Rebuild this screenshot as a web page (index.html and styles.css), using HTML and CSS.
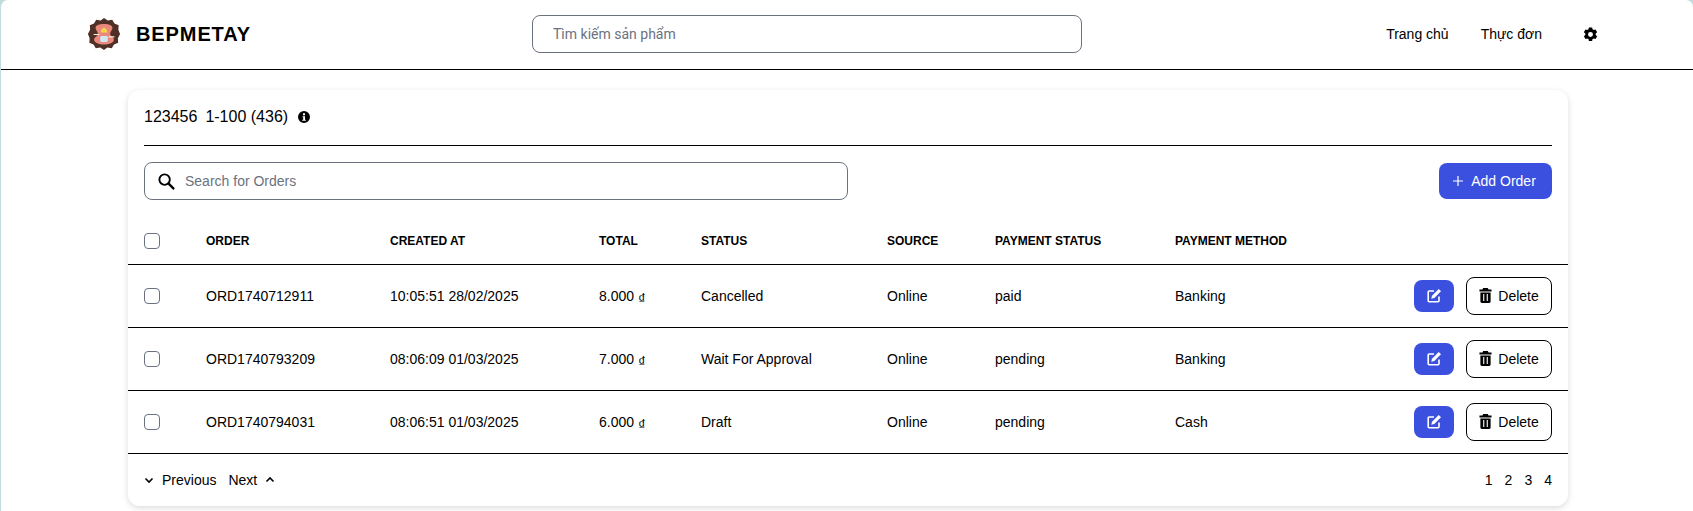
FILE: index.html
```html
<!DOCTYPE html>
<html lang="vi">
<head>
<meta charset="utf-8">
<title>BEPMETAY</title>
<link rel="stylesheet" href="styles.css">
</head>
<body>
<div class="app">
  <header class="topbar">
    <a class="brand" href="#">
      <svg class="logo" viewBox="0 0 36 36" aria-hidden="true">
        <path fill="#4f2f26" d="M18 1l4 2.600 4.700-.6 2.400 4 4.400 1.800-.3 4.700L35 18l-2.300 4.500.3 4.700-4.400 1.800-2.400 4-4.700-.6L18 35l-4-2.600-4.700.6-2.400-4-4.400-1.800.3-4.700L1 18l2.300-4.500-.3-4.700 4.400-1.800 2.400-4 4.700.6z"/>
        <path fill="#e8897c" d="M9 11.500C9 9 13 7.500 18 7.500s9 1.500 9 4c0 2.500-2.500 4-2.500 6.500s4 3 4 6c0 3-5 5-10.500 5S7.500 27 7.500 24c0-3 4-3.500 4-6S9 14 9 11.500z"/>
        <path fill="#f7d24f" d="M14.500 16.500c0-2.500 1.500-5 3.500-5s3.500 2.500 3.500 5z"/>
        <rect x="14" y="20" width="8" height="6.500" rx="1.500" fill="#cfe6f5"/>
        <path fill="none" stroke="#f5ece6" stroke-width="1.200" d="M7 18.500h6M23 21h6"/>
      </svg>
      <span class="brand-name">BEPMETAY</span>
    </a>
    <input class="site-search" type="text" placeholder="Tìm kiếm sản phẩm">
    <nav class="nav">
      <a href="#">Trang chủ</a>
      <a href="#">Thực đơn</a>
      <svg class="gear" viewBox="0 0 24 24" aria-hidden="true"><path fill="#000" fill-rule="evenodd" d="M14.300 2l.5 2.700c.6.200 1.200.6 1.700 1l2.600-.9 2.300 4-2.100 1.800c.1.700.1 1.300 0 2l2.100 1.800-2.300 4-2.600-.9c-.5.400-1.100.8-1.700 1l-.5 2.700H9.700l-.5-2.700c-.6-.2-1.200-.6-1.700-1l-2.600.9-2.300-4 2.100-1.800c-.1-.7-.1-1.300 0-2L2.600 8.800l2.300-4 2.600.9c.5-.4 1.100-.8 1.700-1L9.700 2zM12 8.500a3.500 3.500 0 1 0 0 7 3.500 3.500 0 0 0 0-7z"/></svg>
    </nav>
  </header>

  <main class="content">
    <section class="card">
      <div class="card-title">
        <span>123456</span>
        <span>1-100 (436)</span>
        <svg class="info" viewBox="0 0 16 16" aria-hidden="true"><path fill="#000" fill-rule="evenodd" d="M8 2a6 6 0 1 1 0 12A6 6 0 0 1 8 2zM7 4.300h2v2H7zM6.500 7.300H9v3.500h.800v1H6.300v-1h.900V8.300h-.700z"/></svg>
      </div>
      <div class="toolbar">
        <label class="order-search">
          <svg class="search-icon" viewBox="0 0 20 20" aria-hidden="true"><circle cx="8" cy="8" r="5.500" fill="none" stroke="#000" stroke-width="2"/><path d="M12 12l6 6" stroke="#000" stroke-width="2.400"/></svg>
          <input type="text" placeholder="Search for Orders">
        </label>
        <button class="btn-add" type="button">
          <svg class="plus" viewBox="0 0 12 12" aria-hidden="true"><path d="M6 1v10M1 6h10" stroke="#fff" stroke-width="1.200"/></svg>
          Add Order
        </button>
      </div>
      <table class="orders">
        <colgroup>
          <col class="c-check"><col class="c-order"><col class="c-created"><col class="c-total"><col class="c-status"><col class="c-source"><col class="c-pay"><col class="c-method"><col class="c-actions">
        </colgroup>
        <thead>
          <tr>
            <th><span class="check"></span></th>
            <th>ORDER</th><th>CREATED AT</th><th>TOTAL</th><th>STATUS</th><th>SOURCE</th><th>PAYMENT STATUS</th><th>PAYMENT METHOD</th><th></th>
          </tr>
        </thead>
        <tbody>
          <tr>
            <td><span class="check"></span></td>
            <td>ORD1740712911</td><td>10:05:51 28/02/2025</td><td>8.000 <span class="cur">₫</span></td><td>Cancelled</td><td>Online</td><td>paid</td><td>Banking</td>
            <td><div class="actions"><button class="btn-edit" type="button"><svg viewBox="0 0 16 16" aria-hidden="true"><use href="#i-edit"/></svg></button><button class="btn-del" type="button"><svg viewBox="0 0 14 16" aria-hidden="true"><use href="#i-trash"/></svg>Delete</button></div></td>
          </tr>
          <tr>
            <td><span class="check"></span></td>
            <td>ORD1740793209</td><td>08:06:09 01/03/2025</td><td>7.000 <span class="cur">₫</span></td><td>Wait For Approval</td><td>Online</td><td>pending</td><td>Banking</td>
            <td><div class="actions"><button class="btn-edit" type="button"><svg viewBox="0 0 16 16" aria-hidden="true"><use href="#i-edit"/></svg></button><button class="btn-del" type="button"><svg viewBox="0 0 14 16" aria-hidden="true"><use href="#i-trash"/></svg>Delete</button></div></td>
          </tr>
          <tr>
            <td><span class="check"></span></td>
            <td>ORD1740794031</td><td>08:06:51 01/03/2025</td><td>6.000 <span class="cur">₫</span></td><td>Draft</td><td>Online</td><td>pending</td><td>Cash</td>
            <td><div class="actions"><button class="btn-edit" type="button"><svg viewBox="0 0 16 16" aria-hidden="true"><use href="#i-edit"/></svg></button><button class="btn-del" type="button"><svg viewBox="0 0 14 16" aria-hidden="true"><use href="#i-trash"/></svg>Delete</button></div></td>
          </tr>
        </tbody>
      </table>
      <div class="pager">
        <div class="pager-nav">
          <svg class="chev" viewBox="0 0 10 10" aria-hidden="true"><path d="M1.500 3.500L5 7l3.500-3.500" fill="none" stroke="#000" stroke-width="1.600"/></svg>
          <span class="prev">Previous</span>
          <span class="next">Next</span>
          <svg class="chev" viewBox="0 0 10 10" aria-hidden="true"><path d="M1.500 6.500L5 3l3.500 3.500" fill="none" stroke="#000" stroke-width="1.600"/></svg>
        </div>
        <div class="pages"><span>1</span><span>2</span><span>3</span><span>4</span></div>
      </div>
    </section>
  </main>
</div>
<svg class="defs" aria-hidden="true">
  <symbol id="i-edit" viewBox="0 0 16 16">
    <path fill="none" stroke="currentColor" stroke-width="1.600" d="M8 3H3.200a1 1 0 0 0-1 1v8.800a1 1 0 0 0 1 1H12a1 1 0 0 0 1-1V8.500"/>
    <path fill="currentColor" d="M12.700 1l2.300 2.300L8.300 10l-3 .7.700-3z"/>
  </symbol>
  <symbol id="i-trash" viewBox="0 0 14 16">
    <path fill="currentColor" fill-rule="evenodd" d="M4.500 0h5l.8 1.500H13.500v2.200H.5V1.500h3.200zM1.500 4.700h11v9.800A1.500 1.500 0 0 1 11 16H3a1.500 1.500 0 0 1-1.500-1.500zM4.500 6.500v7.500h1.200V6.500zM8.300 6.500v7.500h1.200V6.500z"/>
  </symbol>
</svg>
</body>
</html>
```
FILE: styles.css
```css
* { box-sizing: border-box; }
html, body { margin: 0; padding: 0; }
body {
  background: #c3dade;
  font-family: "Liberation Sans", Arial, sans-serif;
  font-size: 14px;
  color: #000;
  height: 511px;
  overflow: hidden;
  padding-left: 1px;
}
.app {
  background: #fff;
  height: 511px;
  border-radius: 7px 7px 0 0;
}
.topbar {
  height: 70px;
  border-bottom: 1px solid #000;
  display: flex;
  align-items: center;
  padding: 0 94px 1px 86px;
}
.brand {
  display: flex;
  align-items: center;
  gap: 16px;
  text-decoration: none;
  color: #000;
  width: 445px;
}
.logo { width: 34px; height: 34px; display: block; }
.brand-name {
  font-size: 20px;
  font-weight: 700;
  letter-spacing: 0.900px;
  margin-left: -1px;
}
.site-search {
  width: 550px;
  height: 38px;
  border: 1px solid #6b7280;
  border-radius: 8px;
  padding: 0 20px;
  font-family: Roboto, sans-serif;
  font-size: 14px;
  outline: none;
  background: #fff;
}
.site-search::placeholder, .order-search input::placeholder { color: #6b7280; opacity: 1; }
.nav {
  display: flex;
  align-items: center;
  gap: 32px;
  margin-left: auto;
}
.nav a { color: #000; text-decoration: none; font-size: 14px; }
.gear { width: 17px; height: 17px; display: block; margin-left: 8px; }
.content { padding: 20px 125px 0 127px; }
.card {
  background: #fff;
  border-radius: 12px;
  box-shadow: 0 2px 6px rgba(0,0,0,.14);
  height: 416px;
  display: flex;
  flex-direction: column;
}
.card-title {
  margin: 0 16px;
  height: 56px;
  border-bottom: 1px solid #000;
  display: flex;
  align-items: center;
  gap: 8px;
  font-size: 16px;
  padding-bottom: 2px;
}
.info { width: 16px; height: 16px; display: block; }
.toolbar {
  display: flex;
  justify-content: space-between;
  align-items: center;
  padding: 16px 16px 0;
}
.order-search {
  width: 704px;
  height: 38px;
  border: 1px solid #6b7280;
  border-radius: 8px;
  display: flex;
  align-items: center;
  padding-left: 12px;
  gap: 7px;
}
.search-icon { width: 19px; height: 19px; display: block; flex: none; }
.order-search input {
  border: 0;
  outline: 0;
  flex: 1;
  height: 100%;
  background: transparent;
  font-family: "Liberation Sans", Arial, sans-serif;
  font-size: 14px;
  border-radius: 8px;
}
.btn-add {
  width: 113px;
  height: 36px;
  background: #3b50df;
  color: #fff;
  border: 0;
  border-radius: 8px;
  font-family: "Liberation Sans", Arial, sans-serif;
  font-size: 14px;
  display: flex;
  align-items: center;
  justify-content: center;
  gap: 7px;
  padding: 0 3px 0 0;
}
.plus { width: 12px; height: 12px; display: block; }
.orders {
  width: 100%;
  table-layout: fixed;
  border-collapse: collapse;
  margin-top: 1px;
}
.c-check { width: 78px; }
.c-order { width: 184px; }
.c-created { width: 209px; }
.c-total { width: 102px; }
.c-status { width: 186px; }
.c-source { width: 108px; }
.c-pay { width: 180px; }
.c-method { width: 160px; }
.orders th {
  height: 63px;
  font-size: 12px;
  font-weight: 700;
  text-align: left;
  padding: 17px 0 0;
  border-bottom: 1px solid #000;
}
.orders td {
  height: 63px;
  padding: 0;
  border-bottom: 1px solid #000;
  font-size: 14px;
}
.orders th:first-child, .orders td:first-child { padding-left: 16px; }
.cur { position: relative; top: 3px; font-size: 15px; }
.check {
  display: block;
  width: 16px;
  height: 16px;
  border: 1px solid #6b7280;
  border-radius: 4px;
  background: #fff;
}
.actions {
  display: flex;
  justify-content: flex-end;
  align-items: center;
  gap: 12px;
  padding-right: 16px;
}
.btn-edit {
  width: 40px;
  height: 32px;
  background: #3b50df;
  color: #fff;
  border: 0;
  border-radius: 8px;
  display: flex;
  align-items: center;
  justify-content: center;
  padding: 0;
}
.btn-edit svg { width: 16px; height: 16px; display: block; }
.btn-del {
  width: 86px;
  height: 38px;
  background: #fff;
  color: #000;
  border: 1px solid #000;
  border-radius: 8px;
  font-family: "Liberation Sans", Arial, sans-serif;
  font-size: 14px;
  display: flex;
  align-items: center;
  justify-content: center;
  gap: 6px;
  padding: 0;
}
.btn-del svg { width: 13px; height: 15px; display: block; }
.pager {
  display: flex;
  justify-content: space-between;
  align-items: center;
  padding: 0 16px;
  flex: 1;
}
.pager-nav { display: flex; align-items: center; }
.chev { width: 10px; height: 10px; display: block; }
.prev { margin-left: 8px; }
.next { margin: 0 8px 0 12px; }
.pages { display: flex; gap: 12px; }
.defs { display: none; }
```
